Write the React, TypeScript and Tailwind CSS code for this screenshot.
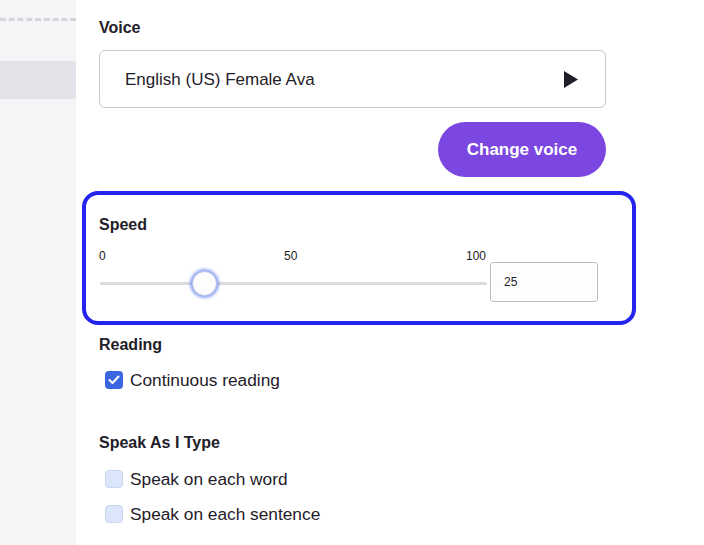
import React from "react";

export default function App() {
  return (
    <div className="flex h-[545px] w-[704px] overflow-hidden bg-white text-[#1f2029]" style={{ fontFamily: '"Liberation Sans", Arial, sans-serif' }}>
      <aside className="w-[76px] shrink-0 bg-[#f4f5f7]">
        <div className="mt-[18px] border-t-[3px] border-dashed border-[#d4d5d9]" />
        <div className="mt-[40px] h-[38px] bg-[#e2e4ea]" />
      </aside>
      <main className="flex-1 pl-[23px]">
        <div className="mt-[19px] text-[16px] font-bold leading-[18px]">Voice</div>
        <div className="mt-[13px] flex h-[58px] w-[507px] items-center justify-between rounded-[6px] border border-[#c8c8cc] pl-[25px] pr-[27px]">
          <span className="mt-[2px] text-[17px]">English (US) Female Ava</span>
          <svg width="14" height="17" viewBox="0 0 14 17"><path d="M0 0 L14 8.5 L0 17 Z" fill="#1f2029" /></svg>
        </div>
        <div className="mt-[14px] flex w-[507px] justify-end">
          <button className="h-[55px] w-[168px] rounded-full bg-[#7b47e0] text-[17px] font-bold text-white">Change voice</button>
        </div>
        <div className="-ml-[17px] mt-[14px] h-[134px] w-[554px] rounded-[16px] border-[4px] border-[#2424ee] pl-[13px] pt-[21px]">
          <div className="text-[16px] font-bold leading-[18px]">Speed</div>
          <div className="mt-[15px] flex items-start">
            <div className="w-[389px]">
              <div className="relative h-[14px] text-[12px] leading-[14px] text-[#222]">
                <span className="absolute left-0">0</span>
                <span className="absolute left-[185px]">50</span>
                <span className="absolute left-[367px]">100</span>
              </div>
              <div className="relative ml-[1px] mt-[19px] h-[3px] w-[387px] rounded-full bg-[#dcdcdc]">
                <div className="absolute left-[92px] top-[-11px] h-[25px] w-[25px] rounded-full border border-[#b9c4e6] bg-[#fdfdfd] shadow-[0_0_3px_2px_rgba(90,120,240,0.65)]" />
              </div>
            </div>
            <div className="ml-[2px] mt-[13px] flex h-[40px] w-[108px] items-center rounded-[3px] border border-[#bdbdc2] bg-[#fdfdfd] pl-[13px] text-[12px]">25</div>
          </div>
        </div>
        <div className="mt-[11px] text-[16px] font-bold leading-[18px]">Reading</div>
        <div className="mt-[16px] flex items-center">
          <div className="ml-[6px] flex h-[18px] w-[18px] items-center justify-center rounded-[4px] bg-[#3a67e0]">
            <svg width="12" height="10" viewBox="0 0 12 10"><path d="M1.5 5 L4.5 8 L10.5 1.5" stroke="white" strokeWidth="2" fill="none" strokeLinecap="round" strokeLinejoin="round" /></svg>
          </div>
          <span className="ml-[7px] text-[17.3px] leading-[20px]">Continuous reading</span>
        </div>
        <div className="mt-[44px] text-[16px] font-bold leading-[18px]">Speak As I Type</div>
        <div className="mt-[17px] flex items-center">
          <div className="ml-[6px] h-[18px] w-[18px] rounded-[4px] border border-[#c6d6f5] bg-[#dce6fb]" />
          <span className="ml-[7px] text-[17.3px] leading-[20px]">Speak on each word</span>
        </div>
        <div className="mt-[15px] flex items-center">
          <div className="ml-[6px] h-[18px] w-[18px] rounded-[4px] border border-[#c6d6f5] bg-[#dce6fb]" />
          <span className="ml-[7px] text-[17.3px] leading-[20px]">Speak on each sentence</span>
        </div>
      </main>
    </div>
  );
}
